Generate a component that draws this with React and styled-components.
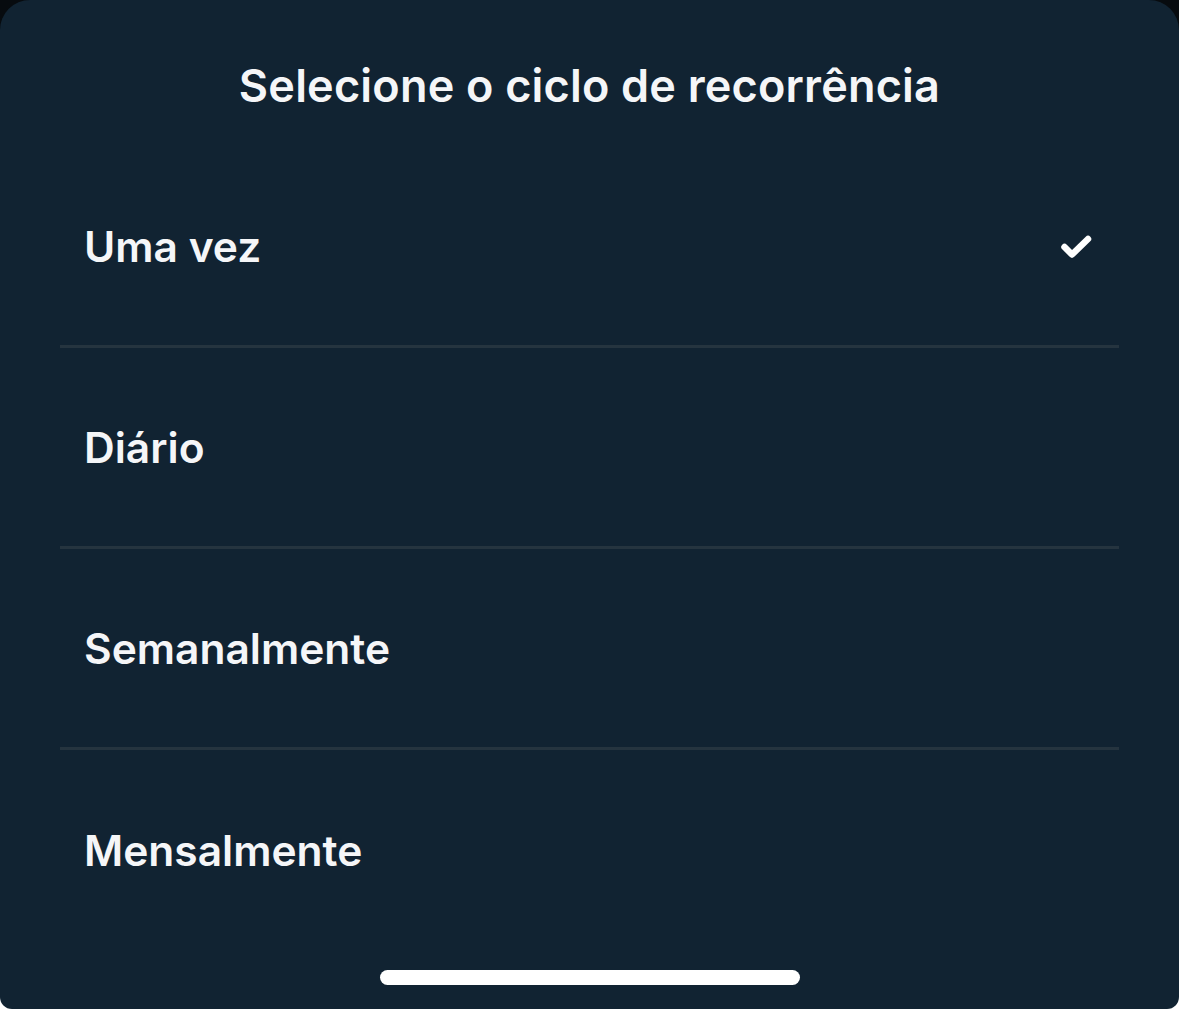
import React from "react";
import styled, { createGlobalStyle } from "styled-components";

const GlobalStyle = createGlobalStyle`
  html, body {
    margin: 0;
    padding: 0;
    height: 100%;
  }
  body {
    background: linear-gradient(#070b0f 50%, #ffffff 50%);
    font-family: Inter, "Noto Sans", sans-serif;
    -webkit-font-smoothing: antialiased;
  }
`;

const Sheet = styled.div`
  width: 1179px;
  height: 1009px;
  box-sizing: border-box;
  background: #112332;
  border-radius: 30px 30px 12px 12px;
  display: flex;
  flex-direction: column;
  color: #f5f6f8;
`;

const Title = styled.h1`
  margin: 0;
  padding-top: 59px;
  height: 88px;
  box-sizing: content-box;
  text-align: center;
  font-size: 45px;
  font-weight: 600;
  line-height: 54px;
  letter-spacing: 0.2px;
`;

const List = styled.ul`
  list-style: none;
  margin: 0;
  padding: 0 60px;
`;

const Row = styled.li`
  display: flex;
  align-items: center;
  justify-content: space-between;
  padding: 0 26px 0 24px;
  border-bottom: ${({ $last }) => ($last ? "none" : "3px solid #25343f")};
  font-size: 42.5px;
  font-weight: 600;
  box-sizing: border-box;
  height: ${({ $last }) => ($last ? "200px" : "201px")};
`;

const CheckIcon = styled.svg`
  width: 34px;
  height: 32px;
  flex-shrink: 0;
`;

const Check = () => (
  <CheckIcon viewBox="0 0 34 32">
    <polyline
      points="5.5,17 13,24.5 29,9"
      fill="none"
      stroke="#ffffff"
      strokeWidth="6.5"
      strokeLinecap="round"
      strokeLinejoin="round"
    />
  </CheckIcon>
);

const Footer = styled.div`
  flex: 1;
  display: flex;
  align-items: flex-end;
  justify-content: center;
  padding-bottom: 24px;
`;

const HomeBar = styled.div`
  width: 420px;
  height: 15px;
  border-radius: 8px;
  background: #ffffff;
`;

const options = ["Uma vez", "Diário", "Semanalmente", "Mensalmente"];

export default function App() {
  return (
    <>
      <GlobalStyle />
      <Sheet>
        <Title>Selecione o ciclo de recorrência</Title>
        <List>
          {options.map((opt, i) => (
            <Row key={opt} $last={i === options.length - 1}>
              <span>{opt}</span>
              {i === 0 && <Check />}
            </Row>
          ))}
        </List>
        <Footer>
          <HomeBar />
        </Footer>
      </Sheet>
    </>
  );
}
